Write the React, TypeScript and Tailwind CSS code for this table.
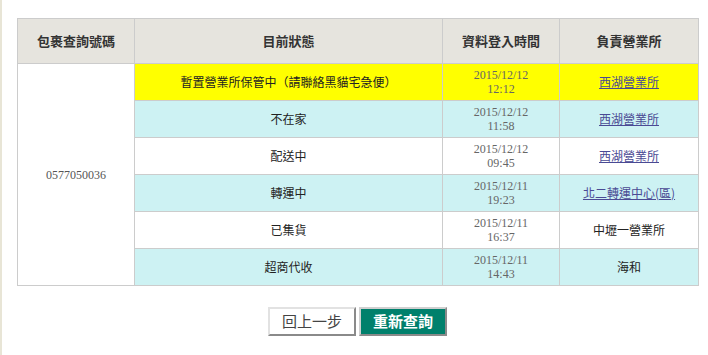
import React from "react";

type Row = {
  status: string;
  date: string;
  time: string;
  office: string;
  link: boolean;
  bg: string;
};

const rows: Row[] = [
  { status: "暫置營業所保管中（請聯絡黑貓宅急便）", date: "2015/12/12", time: "12:12", office: "西湖營業所", link: true, bg: "bg-[#ffff00]" },
  { status: "不在家", date: "2015/12/12", time: "11:58", office: "西湖營業所", link: true, bg: "bg-[#cdf2f3]" },
  { status: "配送中", date: "2015/12/12", time: "09:45", office: "西湖營業所", link: true, bg: "bg-white" },
  { status: "轉運中", date: "2015/12/11", time: "19:23", office: "北二轉運中心(區)", link: true, bg: "bg-[#cdf2f3]" },
  { status: "已集貨", date: "2015/12/11", time: "16:37", office: "中壢一營業所", link: false, bg: "bg-white" },
  { status: "超商代收", date: "2015/12/11", time: "14:43", office: "海和", link: false, bg: "bg-[#cdf2f3]" },
];

const cjk = "font-['Noto_Sans_CJK_TC','Noto_Sans',sans-serif]";
const serif = "font-['Liberation_Serif','Times_New_Roman',serif]";

export default function App() {
  return (
    <div className="flex min-h-[355px] w-[708px] bg-white">
      <div className="w-[2px] shrink-0 bg-[#e8e5d6]" />
      <div className="flex flex-col pl-[15px] pt-[18px]">
        <table className="w-[681px] table-fixed border-collapse border border-[#cccccc]">
          <colgroup>
            <col className="w-[117px]" />
            <col className="w-[308px]" />
            <col className="w-[117px]" />
            <col className="w-[139px]" />
          </colgroup>
          <thead>
            <tr className="h-[45px] bg-[#e6e4de]">
              {["包裹查詢號碼", "目前狀態", "資料登入時間", "負責營業所"].map((h) => (
                <th
                  key={h}
                  className={`border border-[#cccccc] p-0 text-center text-[13px] font-bold text-[#333333] ${cjk}`}
                >
                  {h}
                </th>
              ))}
            </tr>
          </thead>
          <tbody>
            {rows.map((r, i) => (
              <tr key={i} className={`h-[37px] ${r.bg}`}>
                {i === 0 && (
                  <td
                    rowSpan={6}
                    className={`border border-[#cccccc] bg-white p-0 text-center text-[12px] text-[#555555] ${serif}`}
                  >
                    0577050036
                  </td>
                )}
                <td className={`border border-[#cccccc] p-0 text-center text-[12px] text-[#222222] ${cjk}`}>
                  {r.status}
                </td>
                <td className={`border border-[#cccccc] p-0 text-center text-[12px] leading-[14px] text-[#666666] ${serif}`}>
                  <div>{r.date}</div>
                  <div>{r.time}</div>
                </td>
                <td className={`border border-[#cccccc] p-0 text-center text-[12px] ${cjk}`}>
                  {r.link ? (
                    <a href="#" className="text-[#4a4a94] underline">
                      {r.office}
                    </a>
                  ) : (
                    <span className="text-[#222222]">{r.office}</span>
                  )}
                </td>
              </tr>
            ))}
          </tbody>
        </table>
        <div className="mt-[21px] flex w-[681px] justify-center gap-[3px]">
          <button
            className={`flex h-[29px] w-[88px] items-center justify-center border-2 border-t-[#e2e2e2] border-l-[#e2e2e2] border-b-[#8a8a8a] border-r-[#8a8a8a] bg-white text-[15px] text-[#444444] ${cjk}`}
          >
            回上一步
          </button>
          <button
            className={`flex h-[29px] w-[88px] items-center justify-center border-2 border-t-[#d0d0d0] border-l-[#d0d0d0] border-b-[#8a8a8a] border-r-[#8a8a8a] bg-[#00806c] text-[15px] font-bold text-white ${cjk}`}
          >
            重新查詢
          </button>
        </div>
      </div>
    </div>
  );
}
